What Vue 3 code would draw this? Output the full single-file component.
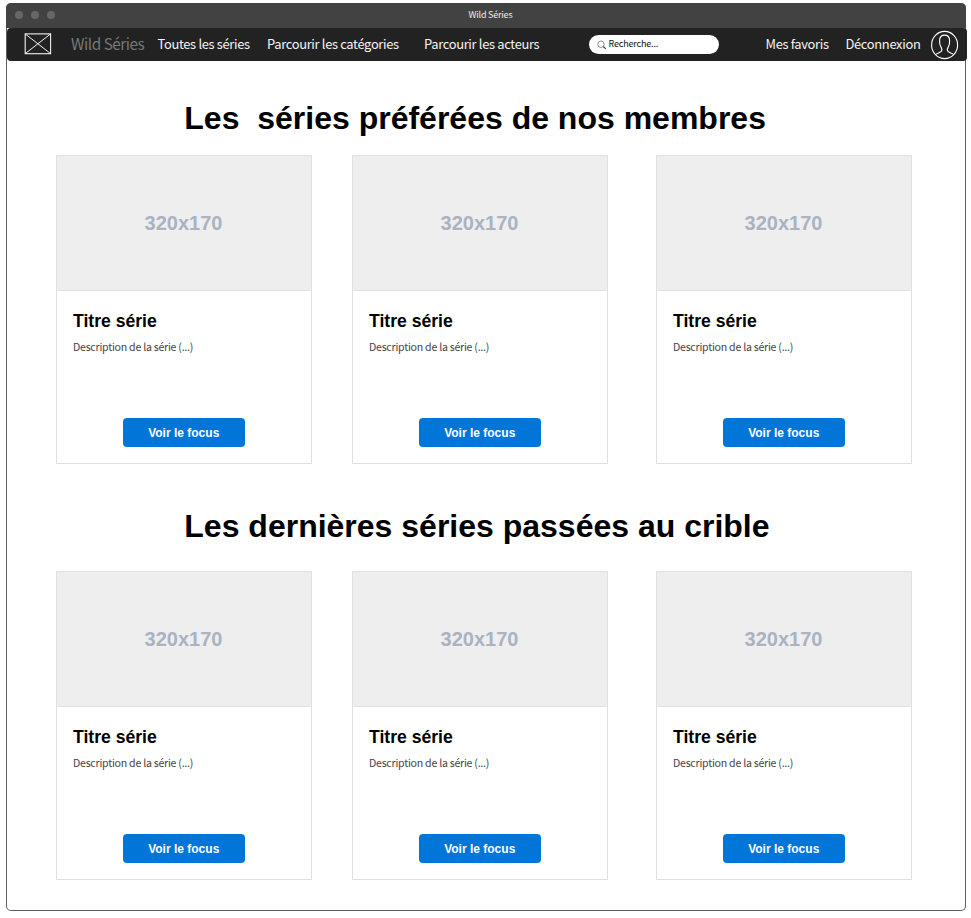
<script setup>
const sections = [
  { id: 'top', title: 'Les\u00a0 séries préférées de nos membres', cards: 3 },
  { id: 'latest', title: 'Les dernières séries passées au crible', cards: 3 },
]
</script>

<template>
  <div class="page">
    <div class="window">
      <header class="titlebar">
        <div class="dots"><i></i><i></i><i></i></div>
        <span class="window-title">Wild Séries</span>
      </header>
      <nav class="navbar">
        <svg class="logo" width="28" height="22" viewBox="0 0 28 22" fill="none" stroke="#f2f2f2">
          <rect x="1.2" y="0.9" width="25.4" height="19.8" stroke-width="1.1" />
          <path d="M1.2 .9 26.6 20.7M26.6 .9 1.2 20.7" stroke-width="1" />
        </svg>
        <span class="brand">Wild Séries</span>
        <a class="link">Toutes les séries</a>
        <a class="link">Parcourir les catégories</a>
        <a class="link">Parcourir les acteurs</a>
        <div class="search">
          <svg width="10" height="10" viewBox="0 0 10 10" fill="none" stroke="#444">
            <circle cx="4" cy="4.2" r="3.2" stroke-width=".6" />
            <path d="M6.3 6.5 8.8 8.9" stroke-width="1.1" />
          </svg>
          <span>Recherche...</span>
        </div>
        <a class="link">Mes favoris</a>
        <a class="link">Déconnexion</a>
        <svg class="avatar" width="28" height="30" viewBox="0 0 28 30" fill="none" stroke="#fff" stroke-width="1.1">
          <ellipse cx="13.6" cy="15" rx="13" ry="13.6" />
          <path d="M4.4 24.6C6.6 22.9 10.4 22.5 10.8 20.7 11.2 18.8 10.5 18 9.7 16.6 8.8 15 8.5 13 8.6 10.3 8.7 7.1 10.6 5.1 13.6 5.1S18.5 7.1 18.6 10.3C18.7 13 18.4 15 17.5 16.6 16.7 18 16 18.8 16.4 20.7 16.8 22.5 20.6 22.9 22.8 24.6" />
        </svg>
      </nav>
      <main>
        <section v-for="s in sections" :key="s.id" :class="s.id">
          <h1>{{ s.title }}</h1>
          <div class="cards">
            <article v-for="n in s.cards" :key="n" class="card">
              <div class="picture">320x170</div>
              <div class="body">
                <h2>Titre série</h2>
                <p>Description de la série (...)</p>
                <button>Voir le focus</button>
              </div>
            </article>
          </div>
        </section>
      </main>
    </div>
  </div>
</template>

<style>
body { background: #fff; }
</style>

<style scoped>
* { box-sizing: border-box; }
.page {
  width: 971px;
  height: 918px;
  padding: 3px 0 0 6px;
  overflow: hidden;
  font-family: "Noto Sans CJK SC", "Noto Sans", sans-serif;
}
.window {
  width: 960px;
  height: 908px;
  border: 1px solid #5c5e60;
  border-top: 0;
  border-radius: 5px;
}
.titlebar {
  display: grid;
  grid-template-columns: 1fr auto 1fr;
  align-items: center;
  height: 25px;
  margin: 0 -1px;
  padding: 0 0 0 9px;
  background: #424242;
  border-radius: 5px 5px 0 0;
}
.dots { display: flex; gap: 8px; padding-bottom: 1px; }
.dots i { width: 8px; height: 8px; border-radius: 50%; background: #666; }
.window-title { padding-bottom: 2px; color: #eee; font-size: 9px; line-height: 23px; letter-spacing: -0.2px; }
.navbar {
  display: grid;
  grid-template-columns: 47px 86.5px 109.5px 157px 165.5px 176px 80px 85.5px 28px;
  align-items: center;
  width: 960px;
  height: 33px;
  padding-left: 17px;
  background: #222;
  border-radius: 4px;
  white-space: nowrap;
}
.logo, .avatar { display: block; }
.logo { margin-bottom: 2px; }
.brand { padding-bottom: 2px; color: #777; font-size: 15.3px; line-height: 31px; letter-spacing: -0.45px; }
.link { padding-bottom: 2px; color: #f4f4f4; font-size: 12.9px; line-height: 31px; letter-spacing: -0.32px; }
.search {
  display: flex;
  align-items: center;
  gap: 2px;
  width: 130px;
  height: 19px;
  margin-left: -0.4px;
  padding-left: 7.4px;
  background: #fff;
  border-radius: 10px;
  color: #111;
  font-size: 9px;
  line-height: 19px;
  letter-spacing: -0.17px;
}
.search span { padding-bottom: 1px; line-height: 18px; }
main { padding-left: 49px; }
.top { padding-top: 39px; }
.latest { padding-top: 44px; }
h1 {
  height: 36px;
  margin: 0 0 0 128.3px;
  color: #000;
  font: bold 32px/36px "Liberation Sans", sans-serif;
  white-space: nowrap;
}
.cards {
  display: grid;
  grid-template-columns: 296px 304px 256px;
  margin-top: 19px;
}
.latest .cards { margin-top: 27px; }
.card {
  width: 256px;
  height: 309px;
  border: 1px solid #e1e1e1;
}
.picture {
  height: 135px;
  padding-right: 1px;
  border-bottom: 1px solid #e1e1e1;
  background: #eee;
  color: #aab2c4;
  font: bold 20px/135px "Liberation Sans", sans-serif;
  text-align: center;
}
.body {
  display: flex;
  flex-direction: column;
  padding: 19px 16px 0;
}
h2 {
  margin: 0;
  color: #000;
  font: bold 17.6px/22px "Liberation Sans", sans-serif;
}
p { margin: 6px 0 0; color: #444; font-size: 10.6px; line-height: 18px; letter-spacing: -0.25px; }
button {
  align-self: center;
  width: 122px;
  height: 29px;
  margin-top: 62px;
  padding: 1px 0.5px 0 0;
  border: 0;
  border-radius: 4px;
  background: #0275d8;
  color: #fff;
  font: bold 12px/28px "Liberation Sans", sans-serif;
}
</style>
